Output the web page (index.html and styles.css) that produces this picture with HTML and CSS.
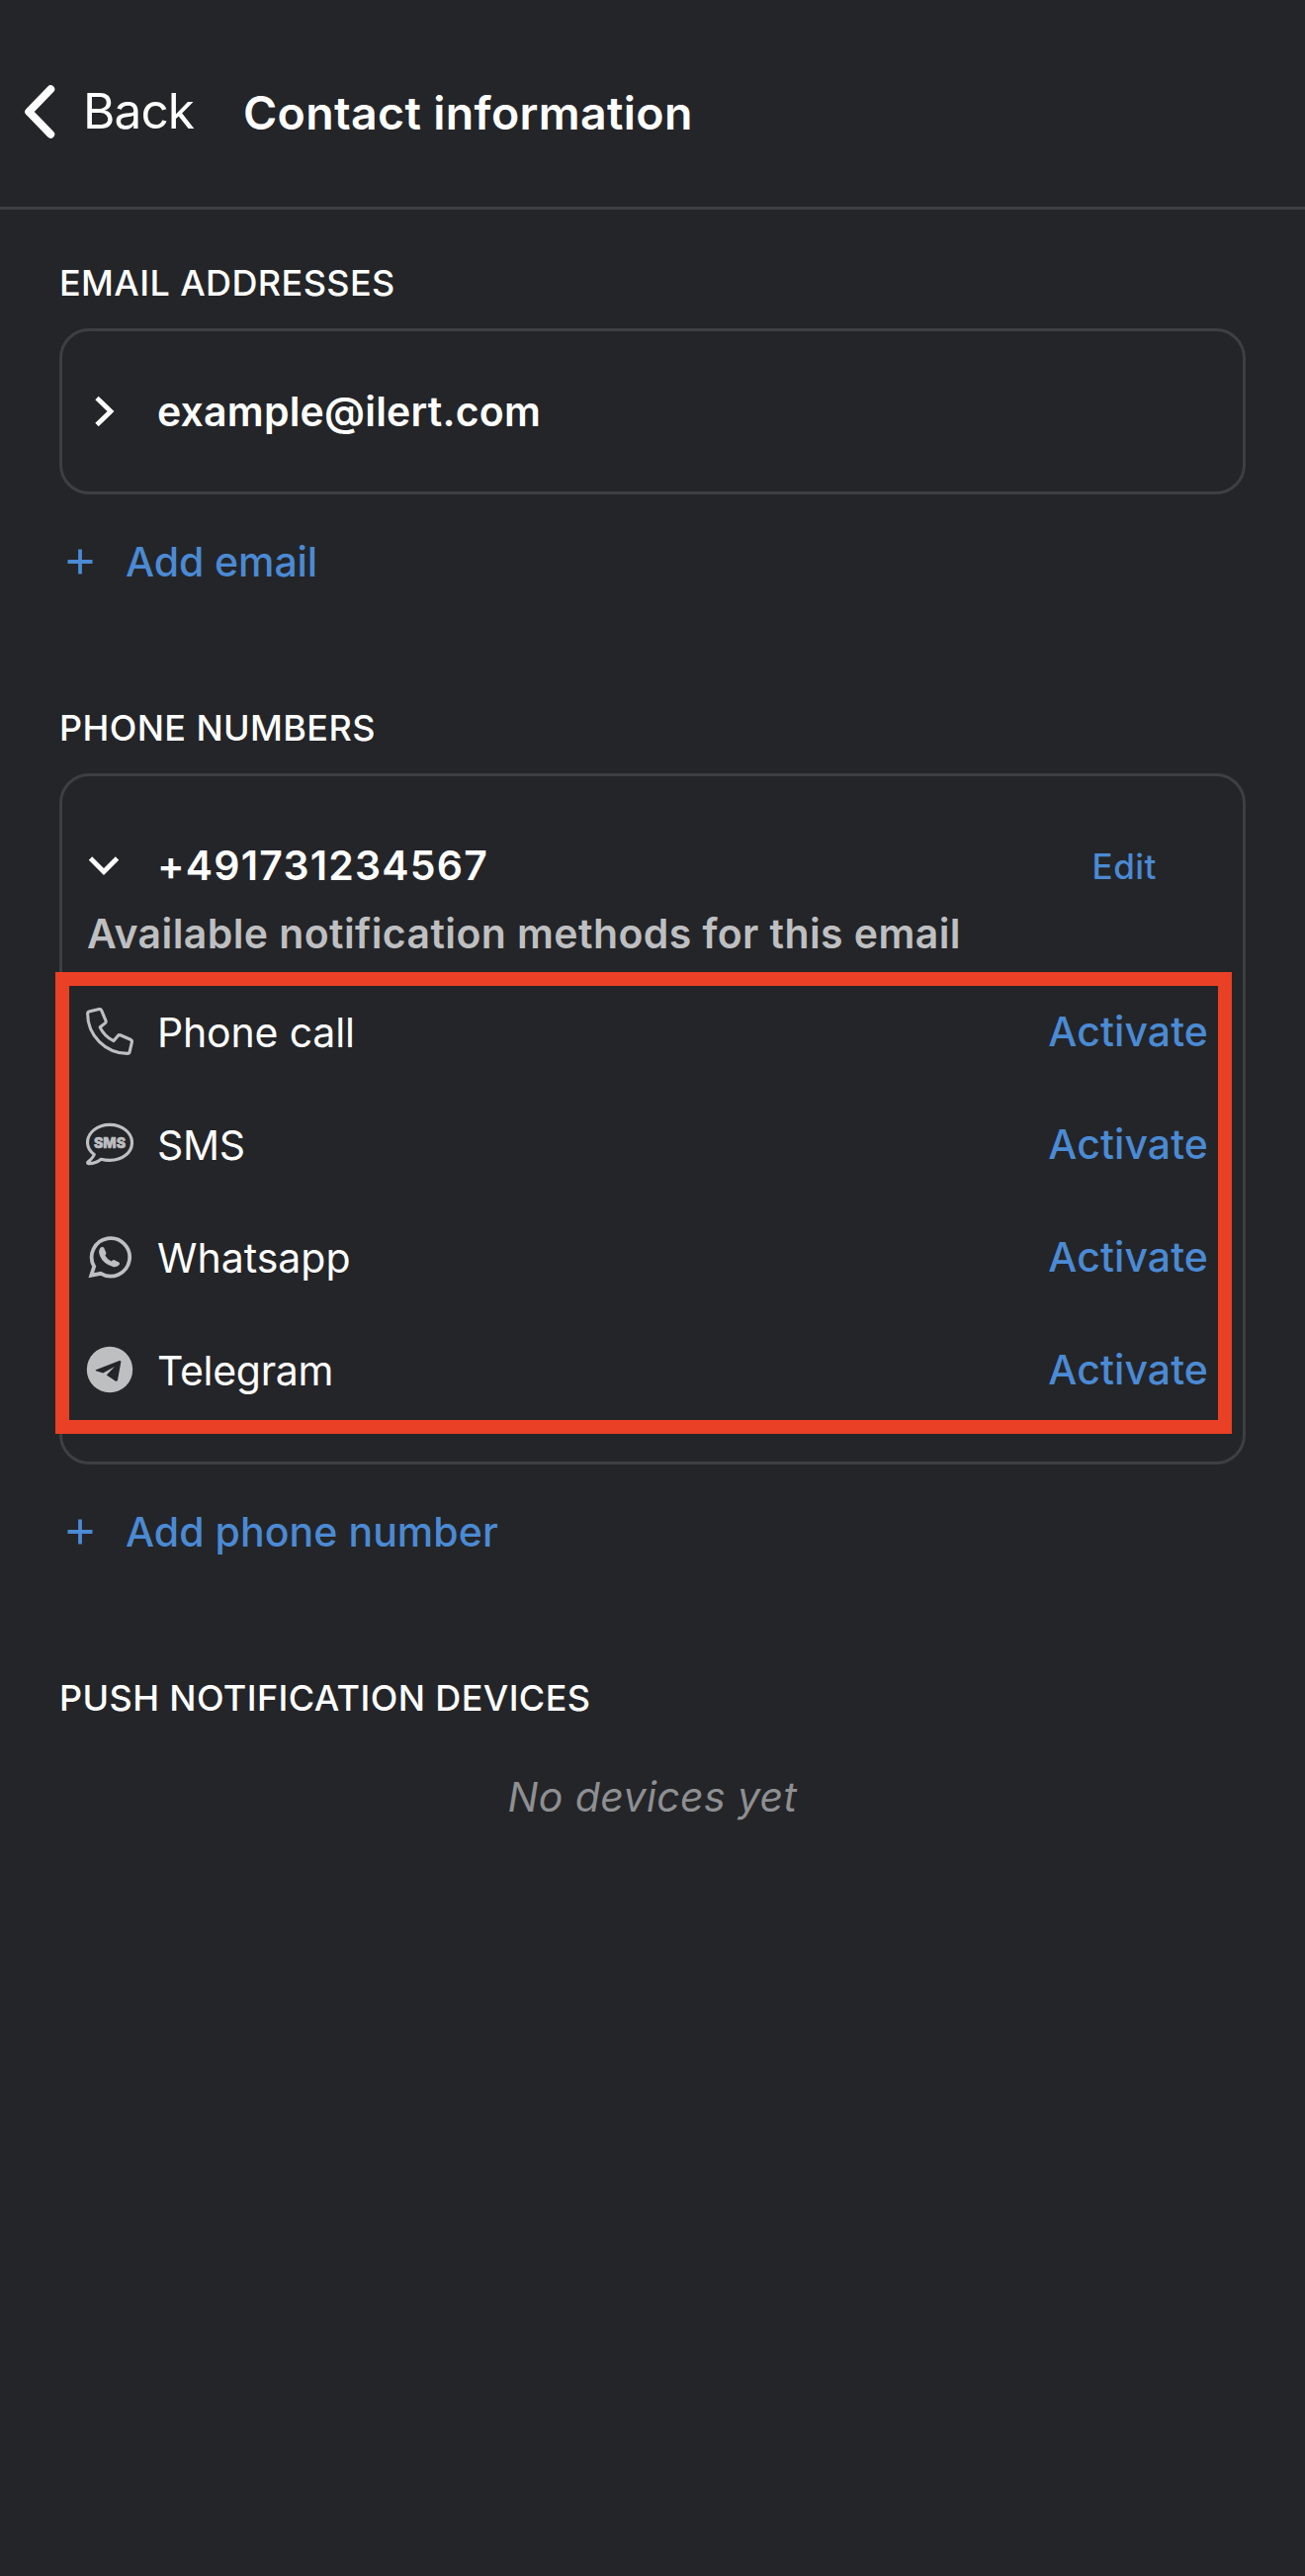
FILE: index.html
```html
<!DOCTYPE html>
<html lang="en">
<head>
<meta charset="utf-8">
<title>Contact information</title>
<link rel="stylesheet" href="styles.css">
</head>
<body>
<header class="header">
  <a class="back">
    <svg class="back-icon" width="32" height="56" viewBox="0 0 32 56"><path d="M27.2 5.2 5.2 28l22 22.8" /></svg>
    <span class="back-label">Back</span>
  </a>
  <h1 class="title">Contact information</h1>
</header>
<main class="content">
  <section class="section">
    <h2 class="section-title">EMAIL ADDRESSES</h2>
    <div class="card card-email">
      <div class="entry">
        <svg class="chevron" width="36" height="36" viewBox="0 0 36 36"><path d="M11 4.5 25 18 11 31.500" /></svg>
        <span class="entry-name email">example@ilert.com</span>
      </div>
    </div>
    <a class="add">
      <svg class="plus" width="26" height="26" viewBox="0 0 26 26"><path d="M13 .5v25M.5 13h25" /></svg>
      <span class="add-email">Add email</span>
    </a>
  </section>
  <section class="section">
    <h2 class="section-title">PHONE NUMBERS</h2>
    <div class="card card-phone">
      <div class="entry">
        <svg class="chevron" width="36" height="36" viewBox="0 0 36 36"><path d="M4.500 11 18 24.500 31.500 11" /></svg>
        <span class="entry-name number">+491731234567</span>
        <a class="edit">Edit</a>
      </div>
      <p class="hint">Available notification methods for this email</p>
      <ul class="methods">
        <li class="method">
          <svg class="icon" width="48" height="48" viewBox="0 0 48 48"><path class="line" d="M3.800 3.700 13.200 1.600Q15 1.200 15.700 2.900L20 13.200Q20.500 14.600 19.400 15.600L14.200 19.800Q18.500 29 28 33.600L32.300 28.400Q33.300 27.300 34.700 27.800L45 32.200Q46.800 33 46.400 34.800L44.200 44.400Q43.800 46.400 41.800 46.400C19.500 46 1.600 28 1.600 6Q1.600 4.200 3.800 3.700Z" /></svg>
          <span class="method-name call">Phone call</span>
          <a class="activate">Activate</a>
        </li>
        <li class="method">
          <svg class="icon" width="48" height="48" viewBox="0 0 48 48"><path class="line" d="M8.300 34.500C4 31.300 1.500 27.200 1.500 22.500 1.500 12.300 11.500 4.400 24 4.400S46.500 12.300 46.500 22.500 36.500 40.400 24 40.400C21 40.400 18 40 15.300 39.200 11.500 42.200 7 43.800 2.400 43.600 1.300 43.500 1.400 42.600 2.100 42 5 39.500 7.200 37.400 8.300 34.500Z" /><text class="badge" x="8" y="28" textLength="32" lengthAdjust="spacingAndGlyphs">SMS</text></svg>
          <span class="method-name sms">SMS</span>
          <a class="activate">Activate</a>
        </li>
        <li class="method">
          <svg class="icon" width="48" height="48" viewBox="0 0 48 48"><path class="ring" d="M5.300 42.700 8.200 33.800A19.200 19.200 0 1 1 15 40.800Z" /><path class="solid" d="M14.800 14.400Q16.500 13.400 18 14.600L20.200 19.400Q20.800 20.900 19.400 22.600 21.500 26.800 25.600 28.600 27.300 26.600 28.800 27.200L33.200 29.400Q34.400 30.200 33.800 31.800 32 34.600 28 34.200 15.500 31 13.200 20 12.800 16.500 14.800 14.400Z" /></svg>
          <span class="method-name">Whatsapp</span>
          <a class="activate">Activate</a>
        </li>
        <li class="method">
          <svg class="icon" width="48" height="48" viewBox="0 0 48 48"><circle class="solid" cx="24" cy="24" r="23.200" /><path class="cut" d="M10 24.200 33.800 15Q35.700 14.500 35.300 16.400L32 34.400Q31.400 36.600 29.600 35.400L20.800 29.500 28.900 20.900 17.300 27.600 10 25.300Q9.300 24.800 10 24.200Z" /></svg>
          <span class="method-name telegram">Telegram</span>
          <a class="activate">Activate</a>
        </li>
      </ul>
    </div>
    <a class="add">
      <svg class="plus" width="26" height="26" viewBox="0 0 26 26"><path d="M13 .5v25M.5 13h25" /></svg>
      <span class="add-phone">Add phone number</span>
    </a>
  </section>
  <section class="section">
    <h2 class="section-title">PUSH NOTIFICATION DEVICES</h2>
    <p class="empty">No devices yet</p>
  </section>
</main>
</body>
</html>
```
FILE: styles.css
```css
*, *::after { box-sizing: border-box; }

body {
  margin: 0;
  min-height: 2605px;
  background: #242528;
  color: #fff;
  font-family: Inter, "Liberation Sans", sans-serif;
  font-size: 41px;
  line-height: 50px;
}

h1, h2, p, ul { margin: 0; padding: 0; }
svg { display: block; flex: none; }

.header {
  display: flex;
  align-items: center;
  height: 212px;
  padding: 17px 24px 0;
  border-bottom: 3px solid #3e3f43;
}
.back { display: flex; align-items: center; gap: 28px; width: 222px; }
.back-icon path { fill: none; stroke: #fff; stroke-width: 8; stroke-linecap: round; stroke-linejoin: round; }
.back-label { font-size: 49.5px; line-height: 60px; letter-spacing: -0.9px; padding-bottom: 2px; }
.title { font-size: 46.5px; line-height: 60px; font-weight: 600; letter-spacing: 0.34px; padding-top: 1px; }

.content { padding: 54px 60px 0; }
.section { margin-bottom: 123px; }
.section-title { font-size: 36px; line-height: 40px; font-weight: 500; letter-spacing: 0.39px; margin-bottom: 26px; }

.card { border: 3px solid #3e3f43; border-radius: 30px; }
.card-email { height: 168px; padding-top: 56px; }
.card-phone { padding: 65px 0 36px; }

.entry { display: flex; align-items: center; gap: 36px; padding: 0 87px 0 24px; }
.chevron path { fill: none; stroke: #fff; stroke-width: 4.8; }
.entry-name { font-weight: 600; }
.email { letter-spacing: 0.2px; }
.number { letter-spacing: 1.2px; }
.edit { margin-left: auto; padding-top: 3px; font-size: 35px; line-height: 47px; font-weight: 500; letter-spacing: 0.48px; color: #4b8ad4; }
.hint { margin-top: 19px; padding-left: 25px; font-weight: 600; letter-spacing: 0.4px; color: #bebfc1; }

.methods { position: relative; margin-top: 17px; list-style: none; }
.methods::after {
  content: "";
  position: absolute;
  top: -3px;
  left: -7px;
  width: 1190px;
  height: 467px;
  border: 14px solid #ea4025;
}
.method { display: flex; align-items: center; gap: 24px; height: 114px; padding: 0 35px 0 24px; }
.method-name { padding-top: 1px; }
.call { letter-spacing: -0.16px; }
.sms { letter-spacing: -0.3px; }
.telegram { letter-spacing: -0.3px; }
.activate { margin-left: auto; font-weight: 500; letter-spacing: 0.1px; color: #4b8ad4; padding-bottom: 1px; }

.line, .ring { fill: none; stroke: #bebfc1; stroke-width: 3.1; stroke-linejoin: round; }
.ring { stroke-width: 3.8; stroke-linejoin: miter; }
.solid { fill: #bebfc1; }
.cut { fill: #242528; }
.badge { fill: #bebfc1; stroke: #bebfc1; stroke-width: 0.7; stroke-linejoin: round; font-size: 14.5px; font-weight: 800; }

.add { display: flex; align-items: center; gap: 33px; margin-top: 43px; padding-left: 8px; font-weight: 500; color: #4b8ad4; }
.plus path { fill: none; stroke: #4b8ad4; stroke-width: 3.8; }
.add-email { letter-spacing: -0.08px; }
.add-phone { letter-spacing: 0.06px; }

.empty { margin-top: 55px; font-style: italic; letter-spacing: 0.39px; text-align: center; color: #8e8f92; }
```
